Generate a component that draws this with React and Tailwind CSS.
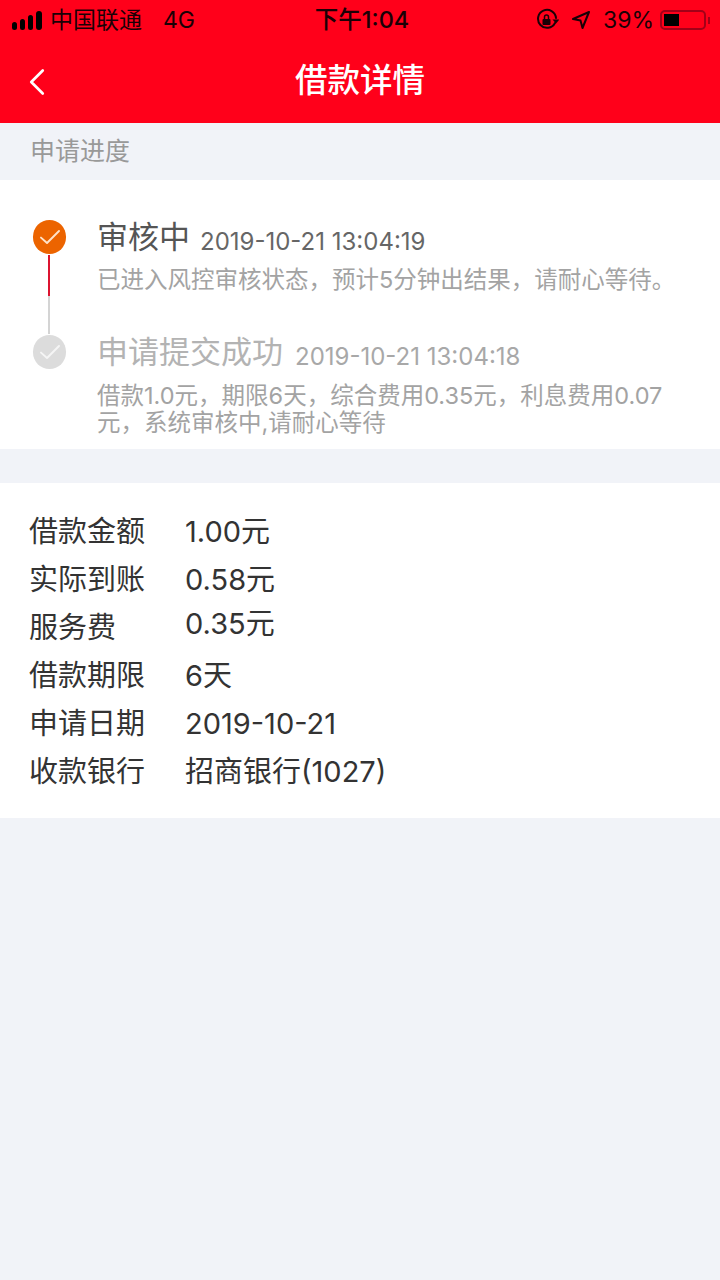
import { ChevronLeft } from "lucide-react";

const cjk = "font-['Inter','Noto_Sans_CJK_SC',sans-serif]";

function StatusBar() {
    return (
        <div className="h-10 flex items-center justify-between pl-3 pr-[10px] text-[#1a0006] text-[23px] leading-none">
            <div className="flex-1 flex items-center">
                <div className="flex items-end gap-[3px]">
                    <div className="w-[5px] h-[8px] rounded-sm bg-black"></div>
                    <div className="w-[5px] h-[11px] rounded-sm bg-black"></div>
                    <div className="w-[5px] h-[15px] rounded-sm bg-black"></div>
                    <div className="w-[6px] h-[19px] rounded-sm bg-black"></div>
                </div>
                <span className="ml-[8px]">中国联通</span>
                <span className="ml-[21px]">4G</span>
            </div>
            <div className="font-medium text-[23.5px] ml-[2px]">下午1:04</div>
            <div className="flex-1 flex items-center justify-end">
                <svg width="24" height="24" viewBox="0 0 24 24" fill="none" stroke="#1a0006" strokeWidth="2">
                    <path d="M20 15a9 9 0 1 1 1-5" strokeLinecap="round" />
                    <path d="M17.5 11.5h7l-3.5 4z" fill="#1a0006" stroke="none" />
                    <rect x="7.5" y="11" width="8" height="6" rx="1" fill="#1a0006" stroke="none" />
                    <path d="M9.5 11V9a2 2 0 0 1 4 0v2" strokeWidth="1.5" />
                </svg>
                <svg className="ml-[12px]" width="20" height="20" viewBox="0 0 20 20" fill="none" stroke="#1a0006" strokeWidth="2" strokeLinejoin="round">
                    <path d="M18 2 2 9l7.5 1.5L11.5 18z" />
                </svg>
                <span className="ml-[12px]">39%</span>
                <div className="ml-[6px] flex items-center">
                    <div className="w-[46px] h-[20px] rounded-[5px] border-2 border-[#a30018] p-[2px]">
                        <div className="w-[15px] h-full bg-black"></div>
                    </div>
                    <div className="ml-[2px] w-[2px] h-[7px] bg-[#a30018]"></div>
                </div>
            </div>
        </div>
    );
}

function CheckDot({ color, check }) {
    return (
        <div className={`w-[33px] h-[34px] rounded-full flex items-center justify-center ${color}`}>
            <svg width="24" height="24" viewBox="0 0 20 20" fill="none" stroke={check} strokeWidth="1.6" strokeLinecap="round" strokeLinejoin="round">
                <path d="M2.5 10.5 7.5 15 17.5 5" />
            </svg>
        </div>
    );
}

function Row({ label, value, nudge }) {
    return (
        <div className="h-12 flex items-center text-[29px] text-[#333333]">
            <div className="w-[156px]">{label}</div>
            <div className={nudge || ""}>{value}</div>
        </div>
    );
}

export default function App() {
    return (
        <div className={`min-h-[1280px] bg-[#f1f3f8] ${cjk}`}>
            <div className="h-[123px] bg-[#ff001a]">
                <StatusBar />
                <div className="h-[83px] flex items-center justify-between">
                    <div className="w-[60px] pl-[14px]">
                        <ChevronLeft size={46} color="#ffffff" strokeWidth={1.4} />
                    </div>
                    <div className="text-white text-[32.5px] font-medium">借款详情</div>
                    <div className="w-[60px]"></div>
                </div>
            </div>

            <div className="h-[57px] flex items-center pt-[1px] px-[30px] text-[25px] text-[#999999]">申请进度</div>

            <div className="h-[269px] bg-white pt-[40px] pl-[33px] flex">
                <div className="w-[33px] flex flex-col items-center">
                    <CheckDot color="bg-[#ec6400]" check="#ffe3c9" />
                    <div className="mt-[1px] -ml-[1px] w-[2px] h-[41px] bg-[#dc1430]"></div>
                    <div className="-ml-[1px] w-[2px] h-[38px] bg-[#d4d4d4]"></div>
                    <div className="mt-[1px]">
                        <CheckDot color="bg-[#dcdcdc]" check="#f5f5f5" />
                    </div>
                </div>
                <div className="ml-[31px] flex-1">
                    <div className="h-[36px] flex items-center -mt-[1px]">
                        <span className="text-[31px] text-[#555555]">审核中</span>
                        <span className="ml-[10px] mt-[10px] text-[24px] text-[#666666]">2019-10-21 13:04:19</span>
                    </div>
                    <div className="mt-[9px] text-[23.5px] leading-[32px] text-[#a3a3a3]">已进入风控审核状态，预计5分钟出结果，请耐心等待。</div>
                    <div className="h-[36px] mt-[38px] flex items-center">
                        <span className="text-[31px] text-[#b3b3b3]">申请提交成功</span>
                        <span className="ml-[12px] mt-[10px] text-[24px] text-[#a8a8a8]">2019-10-21 13:04:18</span>
                    </div>
                    <div className="mt-[12px] pr-[50px] text-[23.5px] leading-[27px] text-[#a3a3a3]">借款1.0元，期限6天，综合费用0.35元，利息费用0.07元，系统审核中,请耐心等待</div>
                </div>
            </div>

            <div className="mt-[34px] h-[335px] bg-white pt-[25px] pl-[29px] pr-[30px]">
                <Row label="借款金额" value="1.00元" />
                <Row label="实际到账" value="0.58元" />
                <Row label="服务费" value="0.35元" nudge="-mt-[8px]" />
                <Row label="借款期限" value="6天" />
                <Row label="申请日期" value="2019-10-21" />
                <Row label="收款银行" value="招商银行(1027)" />
            </div>
        </div>
    );
}
